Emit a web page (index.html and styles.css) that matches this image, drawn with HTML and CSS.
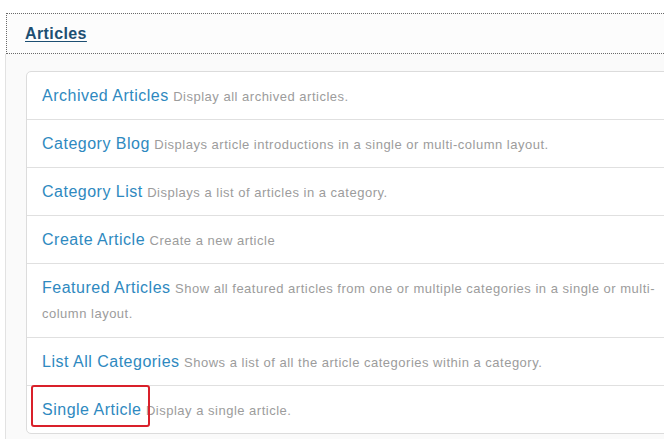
FILE: index.html
```html
<!DOCTYPE html>
<html lang="en">
<head>
<meta charset="utf-8">
<title>Articles</title>
<link rel="stylesheet" href="styles.css">
</head>
<body>
<div class="page">
  <div class="header"><a class="header-link" href="#">Articles</a></div>
  <div class="panel">
    <ul class="list">
      <li class="item"><a class="title" href="#">Archived Articles</a> <span class="desc">Display all archived articles.</span></li>
      <li class="item"><a class="title" href="#">Category Blog</a> <span class="desc">Displays article introductions in a single or multi-column layout.</span></li>
      <li class="item"><a class="title" href="#">Category List</a> <span class="desc">Displays a list of articles in a category.</span></li>
      <li class="item"><a class="title" href="#">Create Article</a> <span class="desc">Create a new article</span></li>
      <li class="item item-tall"><a class="title" href="#">Featured Articles</a> <span class="desc">Show all featured articles from one or multiple categories in a single or multi-column layout.</span></li>
      <li class="item"><a class="title" href="#">List All Categories</a> <span class="desc">Shows a list of all the article categories within a category.</span></li>
      <li class="item"><a class="title highlight" href="#">Single Article</a> <span class="desc">Display a single article.</span></li>
    </ul>
  </div>
</div>
</body>
</html>
```
FILE: styles.css
```css
html, body {
  margin: 0;
  padding: 0;
  overflow: hidden;
  background: #ffffff;
  font-family: "Liberation Sans", Arial, sans-serif;
}

.page {
  width: 720px;
  padding-top: 13px;
  padding-left: 6px;
}

.header {
  height: 39px;
  border: 1px dotted #6a6a6a;
  background: #fcfcfc;
  display: flex;
  align-items: center;
  padding-left: 18px;
}

.header-link {
  font-size: 16px;
  font-weight: bold;
  letter-spacing: 0.4px;
  color: #1d4f72;
  text-decoration: underline;
  text-underline-offset: 2px;
}

.panel {
  margin-left: -1px;
  border-left: 1px solid #e2e2e2;
  background: #fafafa;
  padding: 17px 0 8px 20px;
}

.list {
  list-style: none;
  margin: 0;
  padding: 0;
  width: 650px;
  background: #ffffff;
  border: 1px solid #dcdcdc;
  border-radius: 5px;
}

.item {
  padding: 12px 15px 10px;
  line-height: 24px;
  border-top: 1px solid #e0e0e0;
}

.item:first-child {
  border-top: none;
}

.item-tall {
  padding-bottom: 11px;
}

.title {
  font-size: 16px;
  letter-spacing: 0.5px;
  color: #2e89c0;
  text-decoration: none;
}

.desc {
  font-size: 13px;
  letter-spacing: 0.5px;
  color: #9c9c9c;
}

.highlight {
  position: relative;
}

.highlight::after {
  content: "";
  position: absolute;
  left: -11px;
  right: -8px;
  top: -16px;
  bottom: -9px;
  border: 2px solid #d9202a;
  border-radius: 3px;
}
```
